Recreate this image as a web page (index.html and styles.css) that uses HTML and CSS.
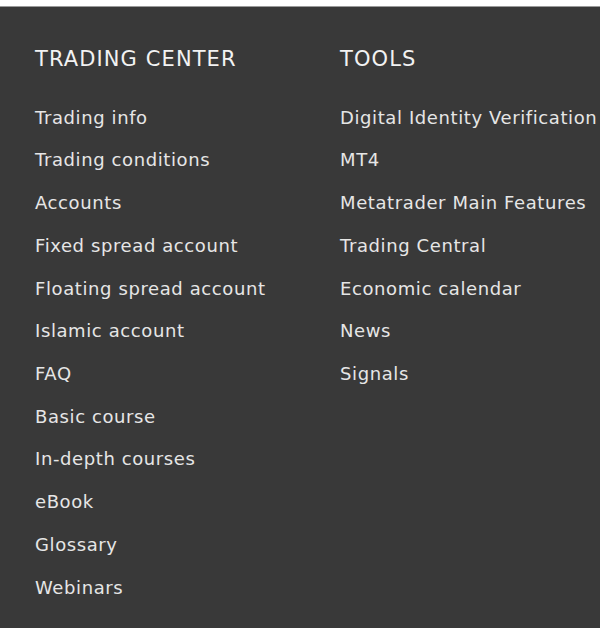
FILE: index.html
```html
<!DOCTYPE html>
<html>
<head>
<meta charset="utf-8">
<link rel="stylesheet" href="styles.css">
</head>
<body>
<footer class="footer">
  <div class="col col-trading">
    <h3 class="heading">TRADING CENTER</h3>
    <ul class="links">
      <li>Trading info</li>
      <li>Trading conditions</li>
      <li>Accounts</li>
      <li>Fixed spread account</li>
      <li>Floating spread account</li>
      <li>Islamic account</li>
      <li>FAQ</li>
      <li>Basic course</li>
      <li>In-depth courses</li>
      <li>eBook</li>
      <li>Glossary</li>
      <li>Webinars</li>
    </ul>
  </div>
  <div class="col">
    <h3 class="heading">TOOLS</h3>
    <ul class="links">
      <li>Digital Identity Verification</li>
      <li>MT4</li>
      <li>Metatrader Main Features</li>
      <li>Trading Central</li>
      <li>Economic calendar</li>
      <li>News</li>
      <li>Signals</li>
    </ul>
  </div>
</footer>
</body>
</html>
```

FILE: styles.css
```css
html, body {
  margin: 0;
  padding: 0;
  background: #ffffff;
}
body {
  padding-top: 6px;
  font-family: "DejaVu Sans", sans-serif;
}
.footer {
  background: #393939;
  border-top: 1px solid #9a9a9a;
  height: 622px;
  box-sizing: border-box;
  display: grid;
  grid-template-columns: 305px 1fr;
  padding: 40px 0 0 35px;
  overflow: hidden;
}
.heading {
  margin: 0 0 25.6px 0;
  font-weight: 400;
  font-size: 21px;
  line-height: 24px;
  color: #f2f2f2;
  letter-spacing: 1.1px;
  white-space: nowrap;
}
.links {
  list-style: none;
  margin: 0;
  padding: 0;
}
.links li {
  font-size: 18px;
  line-height: 42.73px;
  letter-spacing: 0.6px;
  color: #e6e6e6;
  white-space: nowrap;
}
```
